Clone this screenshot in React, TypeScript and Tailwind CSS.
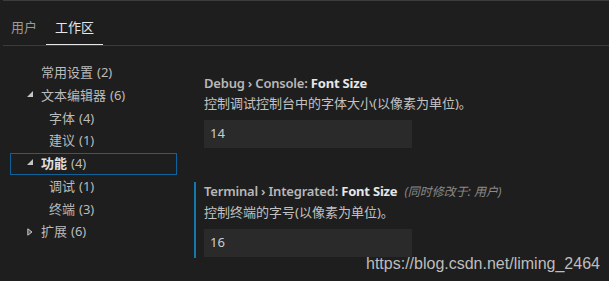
import React from "react";

const font = { fontFamily: '"Noto Sans", "Noto Sans CJK SC", sans-serif' };

type Node = { label: string; count: number; depth: number; twistie?: "open" | "closed"; selected?: boolean };

const toc: Node[] = [
  { label: "常用设置", count: 2, depth: 0 },
  { label: "文本编辑器", count: 6, depth: 0, twistie: "open" },
  { label: "字体", count: 4, depth: 1 },
  { label: "建议", count: 1, depth: 1 },
  { label: "功能", count: 4, depth: 0, twistie: "open", selected: true },
  { label: "调试", count: 1, depth: 1 },
  { label: "终端", count: 3, depth: 1 },
  { label: "扩展", count: 6, depth: 0, twistie: "closed" },
];

function Twistie({ kind }: { kind?: "open" | "closed" }) {
  return (
    <span className="w-[14px] shrink-0 flex items-center">
      {kind === "open" && (
        <svg width="6" height="6" viewBox="0 0 6 6" className="-mt-[3px]">
          <polygon points="6,0 6,6 0,6" fill="#c5c5c5" />
        </svg>
      )}
      {kind === "closed" && (
        <svg width="6" height="8" viewBox="0 0 6 8" className="-mt-[1px]">
          <polygon points="0.8,0.8 5,4 0.8,7.2" fill="#5a5a5a" stroke="#c5c5c5" strokeWidth="1" />
        </svg>
      )}
    </span>
  );
}

function Setting({
  category,
  label,
  note,
  desc,
  value,
  modified,
}: {
  category: string;
  label: string;
  note?: string;
  desc: string;
  value: string;
  modified?: boolean;
}) {
  return (
    <div className={`border-l-2 pl-[8px] pb-[1px] ${modified ? "border-[#0f7aab]" : "border-transparent"}`}>
      <div className="text-[13px] leading-[18px] whitespace-nowrap">
        <span className="font-semibold text-[#b8b8b8] tracking-[-0.2px]">{category}: </span>
        <span className="font-bold text-[#e7e7e7] tracking-[-0.2px]">{label}</span>
        {note && <span className="italic text-[12px] text-[#8a8a8a] ml-[7px]">{note}</span>}
      </div>
      <div className="mt-[2px] text-[13px] leading-[19px] text-[#c2c2c2] whitespace-nowrap">{desc}</div>
      <div className="mt-[7px] w-[208px] h-[28px] bg-[#2a2a2a] flex items-center pl-[6px] text-[13px] text-[#cccccc]">
        {value}
      </div>
    </div>
  );
}

export default function App() {
  return (
    <div className="relative w-[609px] h-[281px] bg-[#1e1e1e] overflow-hidden" style={font}>
      <div className="ml-[3px] h-px bg-[#3c3c3c]" />
      <div className="flex h-[44px] items-end pl-[2px]">
        <div className="px-[9px] pb-[8px] border-b border-transparent text-[13px] leading-[18px] text-[#9a9a9a]">
          用户
        </div>
        <div className="px-[9px] pb-[8px] border-b border-[#e7e7e7] text-[13px] leading-[18px] text-[#e7e7e7]">
          工作区
        </div>
      </div>
      <div className="ml-[3px] h-px bg-[#3c3c3c]" />

      <div className="flex">
        <div className="w-[194px] shrink-0 pl-[10px] pt-[15.5px]">
          {toc.map((n, i) => (
            <div
              key={i}
              className={`w-[167px] h-[22.75px] flex items-center border text-[13px] whitespace-nowrap ${
                n.selected ? "border-[#0e639c]" : "border-transparent"
              } ${n.depth === 0 ? "pl-[16px]" : "pl-[24px]"}`}
            >
              <Twistie kind={n.twistie} />
              <span className={n.selected ? "font-bold text-[#e0e0e0]" : "text-[#bbbbbb]"}>{n.label}</span>
              <span className="text-[#bbbbbb] ml-[4px]">({n.count})</span>
            </div>
          ))}
        </div>

        <div className="flex-1 pt-[28px] flex flex-col gap-[33px]">
          <Setting
            category="Debug › Console"
            label="Font Size"
            desc="控制调试控制台中的字体大小(以像素为单位)。"
            value="14"
          />
          <Setting
            category="Terminal › Integrated"
            label="Font Size"
            note="(同时修改于: 用户)"
            desc="控制终端的字号(以像素为单位)。"
            value="16"
            modified
          />
        </div>
      </div>

      <div
        className="absolute left-[366px] top-[252px] text-[16px] text-[#bdbdbd] whitespace-nowrap"
        style={{ fontFamily: '"Liberation Sans", Arial, sans-serif' }}
      >
        https://blog.csdn.net/liming_2464
      </div>
    </div>
  );
}
